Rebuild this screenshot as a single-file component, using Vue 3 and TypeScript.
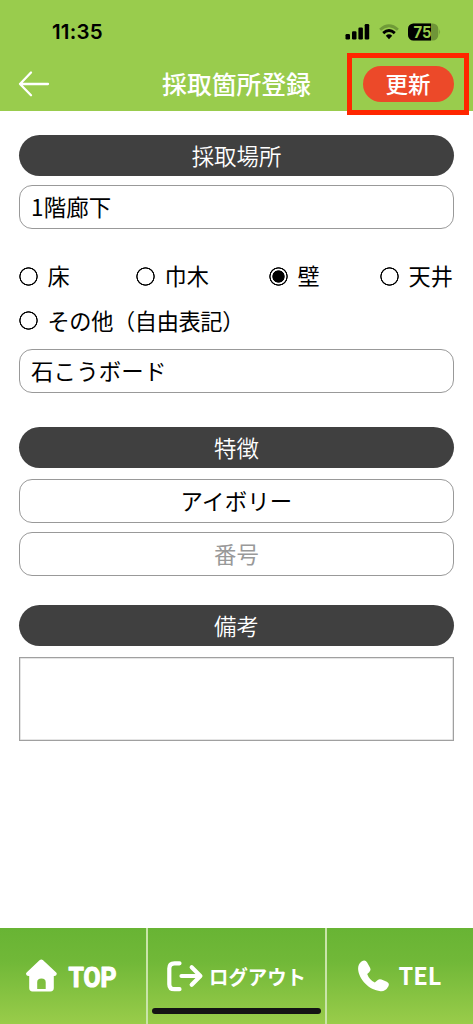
<script setup lang="ts">
import { ref } from 'vue'

interface Option {
  value: string
  label: string
}

const surfaces: Option[] = [
  { value: 'floor', label: '床' },
  { value: 'baseboard', label: '巾木' },
  { value: 'wall', label: '壁' },
  { value: 'ceiling', label: '天井' },
  { value: 'other', label: 'その他（自由表記）' },
]

const place = ref('1階廊下')
const surface = ref('wall')
const material = ref('石こうボード')
const feature = ref('アイボリー')
const number = ref('')
const note = ref('')
</script>

<template>
  <div class="screen">
    <header class="header">
      <div class="status">
        <span class="time">11:35</span>
        <div class="indicators">
          <svg class="signal" width="25" height="17" viewBox="0 0 25 17">
            <rect x="0.5" y="11" width="4.5" height="5.5" rx="1.2" />
            <rect x="7" y="8.3" width="4.5" height="8.2" rx="1.2" />
            <rect x="13.4" y="4.6" width="4.5" height="11.9" rx="1.2" />
            <rect x="19.7" y="1" width="4.5" height="15.5" rx="1.2" />
          </svg>
          <svg class="wifi" width="20" height="16" viewBox="0 0 20 16">
            <path d="M1.1 5.7 Q10 -2.2 18.9 5.7" fill="none" stroke="#6f9a38" stroke-width="2.8" />
            <path d="M4.2 9.1 Q10 4 15.8 9.1" fill="none" stroke="#000" stroke-width="2.9" />
            <path d="M6.8 11.8 Q10 8.9 13.2 11.8 L10 15.2 Z" fill="#000" />
          </svg>
          <svg class="battery" width="33" height="18" viewBox="0 0 33 18">
            <defs>
              <clipPath id="charge"><rect width="23" height="18" /></clipPath>
            </defs>
            <rect y="0.5" width="30.3" height="17" rx="5.5" fill="#6f9538" />
            <rect y="0.5" width="30.3" height="17" rx="5.5" clip-path="url(#charge)" />
            <path d="M31.3 6 Q33 9 31.3 12 Z" fill="#6f9538" />
            <text x="14.5" y="14.7" text-anchor="middle" textLength="18" lengthAdjust="spacingAndGlyphs" class="percent">75</text>
          </svg>
        </div>
      </div>
      <div class="bar">
        <svg class="back" width="32" height="28" viewBox="0 0 32 28">
          <path d="M30 14H2M13 2.5 2 14 13 25.3" />
        </svg>
        <h1 class="title">採取箇所登録</h1>
        <div class="focus"><button class="update">更新</button></div>
      </div>
    </header>

    <main class="form">
      <h2 class="pill">採取場所</h2>
      <input v-model="place" class="field place" />
      <div class="options">
        <label v-for="o in surfaces" :key="o.value" class="option" :class="{ wide: o.value === 'other' }">
          <input v-model="surface" class="radio" type="radio" name="surface" :value="o.value" />
          <span>{{ o.label }}</span>
        </label>
      </div>
      <input v-model="material" class="field" />
      <h2 class="pill feature">特徴</h2>
      <input v-model="feature" class="field centered first" />
      <input v-model="number" class="field centered second" placeholder="番号" />
      <h2 class="pill remarks">備考</h2>
      <textarea v-model="note" class="note"></textarea>
    </main>

    <nav class="tabs">
      <a class="tab">
        <svg width="146" height="96" viewBox="0 0 146 96">
          <path
            fill-rule="evenodd"
            d="M39.5 32.3Q41.3 30.5 43.1 32.3L56.2 44.6Q57.5 45.9 56.2 47.3Q55.5 48 53.8 47.9V60.1Q53.8 63.5 50.3 63.5H32.5Q29.2 63.5 29.2 60.1V47.9Q27.3 48 26.6 47.3Q25.3 45.9 26.6 44.6ZM37.2 61H45.7V54.3Q45.7 50.6 41.5 50.6Q37.2 50.6 37.2 54.3Z"
          />
          <text x="68.5" y="59.4" textLength="48" lengthAdjust="spacingAndGlyphs" class="top">TOP</text>
        </svg>
      </a>
      <a class="tab">
        <svg width="177" height="96" viewBox="-1 0 177 96">
          <path
            class="line"
            d="M30.5 35.3H25.5Q20.3 35.3 20.3 40.5V56.2Q20.3 61.2 25.5 61.2H30.5M32.5 48H51M42.7 39.3 51.4 48 42.7 56.7"
          />
          <text x="60" y="57.3" textLength="97" lengthAdjust="spacingAndGlyphs" class="logout">ログアウト</text>
        </svg>
      </a>
      <a class="tab">
        <svg width="146" height="96" viewBox="-1 0 146 96">
          <path
            d="M33.5 33.6Q37 31 39 34.2L42.2 40Q43.5 42.3 41.2 44.3L39.2 46Q41.2 51.8 46.8 54.4L49.8 52Q51.4 50.8 53.5 51.6L58.8 53.8Q62 55.4 60.3 58.5Q57.5 63.6 52.5 63.2C41 62 30.8 51.5 30.1 41Q29.9 36.2 33.5 33.6Z"
          />
          <text x="70.5" y="57.2" textLength="43" lengthAdjust="spacingAndGlyphs" class="tel">TEL</text>
        </svg>
      </a>
      <div class="home"></div>
    </nav>
  </div>
</template>

<style>
body {
  margin: 0;
  background: #fff;
}
</style>

<style scoped>
.screen {
  width: 473px;
  height: 1024px;
  display: flex;
  flex-direction: column;
  overflow: hidden;
  background: #fff;
  color: #000;
  font-family: 'Noto Sans CJK JP', sans-serif;
}
.screen * {
  box-sizing: border-box;
}
.header {
  height: 110.5px;
  background: #99cc4d;
  flex: none;
}
.status {
  height: 53px;
  padding: 10px 32px 0 52px;
  display: flex;
  justify-content: space-between;
  align-items: center;
}
.time {
  font: 600 20.5px/24px Inter, sans-serif;
  letter-spacing: 0.2px;
}
.indicators {
  display: flex;
  align-items: center;
}
.wifi {
  margin: 0 9px 0 9px;
}
.percent {
  font: 700 16px Inter, sans-serif;
  fill: #99cc4d;
}
.bar {
  height: 62px;
  display: grid;
  grid-template-columns: 126px 1fr 126px;
}
.back {
  margin: 17px 0 0 18px;
  fill: none;
  stroke: #fff;
  stroke-width: 2.3;
  stroke-linecap: round;
  stroke-linejoin: round;
}
.title {
  margin: 0;
  text-align: center;
  color: #fff;
  font-size: 24.8px;
  font-weight: 500;
  line-height: 60px;
}
.focus {
  width: 122px;
  height: 62px;
  border: 5px solid #ff2600;
  display: flex;
  align-items: center;
  justify-content: center;
}
.update {
  width: 91px;
  height: 36px;
  border: 0;
  padding: 0 0 2px;
  border-radius: 18px;
  background: #ec4929;
  color: #fff;
  font: 500 22.5px/34px 'Noto Sans CJK JP', sans-serif;
}
.form {
  flex: 1;
  padding: 24.5px 19px 0;
  display: flex;
  flex-direction: column;
}
.pill {
  margin: 0;
  height: 41px;
  flex: none;
  border-radius: 21px;
  background: #404040;
  color: #fff;
  text-align: center;
  font-size: 22.4px;
  font-weight: 350;
  line-height: 40px;
}
.field {
  width: 100%;
  height: 44px;
  flex: none;
  margin: 0;
  border: 1px solid #999;
  border-radius: 13px;
  background: #fff;
  padding: 0 11px 2px;
  outline: 0;
  color: #000;
  font: 400 22.4px 'Noto Sans CJK JP', sans-serif;
  letter-spacing: 0.2px;
}
.place {
  margin-top: 9px;
}
.options {
  height: 89px;
  margin: 24.5px 0 6.5px;
  display: grid;
  grid-template-columns: 117px 133px 111px 1fr;
  grid-template-rows: 45px 44px;
  align-items: center;
}
.option {
  display: flex;
  align-items: center;
  gap: 9.5px;
  font-size: 22.2px;
  line-height: 42px;
  white-space: nowrap;
}
.option span {
  padding-bottom: 2px;
}
.wide {
  grid-column: 1 / -1;
  letter-spacing: -0.35px;
}
.radio {
  appearance: none;
  flex: none;
  width: 19px;
  height: 19px;
  margin: 0;
  border: 0;
  background: radial-gradient(circle, #fff 0 7.6px, #000 8.2px 8.9px, transparent 9.5px);
}
.radio:checked {
  background: radial-gradient(circle, #000 0 5.8px, #fff 6.5px 7.6px, #000 8.2px 8.9px, transparent 9.5px);
}
.feature {
  margin-top: 34px;
}
.centered {
  text-align: center;
}
.field::placeholder {
  color: #999;
  opacity: 1;
}
.first {
  margin-top: 10.5px;
}
.second {
  margin-top: 9.5px;
}
.remarks {
  margin-top: 28.5px;
}
.note {
  width: 100%;
  height: 84px;
  margin-top: 11.5px;
  border: 1px solid #a0a0a0;
  box-shadow: inset 0 0 0 0.5px #ccc;
  border-radius: 0;
  padding: 10px;
  resize: none;
  outline: 0;
}
.tabs {
  position: relative;
  height: 96px;
  flex: none;
  display: grid;
  grid-template-columns: 146px 179px 148px;
  background: linear-gradient(#68b434, #71b838 35%, #99cc4a);
}
.tab + .tab {
  border-left: 2px solid #c9e4a9;
}
.tab svg {
  display: block;
  fill: #fff;
}
.tab .line {
  fill: none;
  stroke: #fff;
  stroke-width: 4.2;
  stroke-linecap: round;
  stroke-linejoin: round;
}
.top {
  font: 700 28px Roboto, sans-serif;
  stroke: #fff;
  stroke-width: 1.2;
  stroke-linejoin: round;
}
.logout {
  font: 700 20px 'Noto Sans CJK JP', sans-serif;
}
.tel {
  font: 700 24px 'Noto Sans CJK JP', sans-serif;
}
.home {
  position: absolute;
  left: 152px;
  bottom: 10px;
  width: 169px;
  height: 6px;
  border-radius: 3px;
  background: #141414;
}
</style>
